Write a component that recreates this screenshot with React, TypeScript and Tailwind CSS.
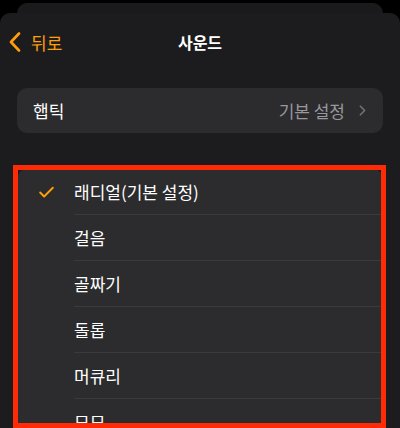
import { Check, ChevronRight } from "lucide-react";

const SOUNDS = ["래디얼(기본 설정)", "걸음", "골짜기", "돌롭", "머큐리", "모모"];

export default function App() {
  return (
    <div
      className="w-[400px] h-[428px] bg-black overflow-hidden flex flex-col"
      style={{ fontFamily: '"Noto Sans CJK KR", "Noto Sans", sans-serif' }}
    >
      {/* stacked sheet behind */}
      <div className="mx-[17px] mt-[3px] h-[10px] shrink-0 rounded-t-[10px] bg-[#1a1a1c]" />

      {/* main sheet */}
      <div className="flex-1 bg-[#1c1c1e] rounded-t-[10px] relative">
        {/* Nav */}
        <div className="h-[58px] relative flex items-center">
          <div className="flex items-center pl-[9px] text-[#ff9f0a]">
            <svg width="12" height="20" viewBox="0 0 12 20" fill="none" stroke="currentColor" strokeWidth="2.6" strokeLinecap="round" strokeLinejoin="round">
              <path d="M10 1.5 L2 10 L10 18.5" />
            </svg>
            <span className="text-[17px] leading-none ml-[10px]">뒤로</span>
          </div>
          <div className="absolute inset-x-0 text-center text-white text-[16px] font-bold leading-none pointer-events-none">
            사운드
          </div>
        </div>

        {/* Haptic */}
        <div className="mx-[17px] mt-[17px] h-[45px] rounded-[10px] bg-[#2c2c2e] flex items-center px-[16px]">
          <span className="text-white text-[17px] leading-none">햅틱</span>
          <span className="ml-auto text-[#98989e] text-[17px] leading-none">기본 설정</span>
          <ChevronRight className="w-[17px] h-[17px] text-[#707075] ml-[9px] -mr-[4px]" strokeWidth={2.4} />
        </div>

        {/* Sound list */}
        <div className="mx-[17px] mt-[36px] rounded-t-[10px] bg-[#2c2c2e]">
          {SOUNDS.map((s, i) => (
            <div key={s} className="h-[46px] flex items-center">
              <div className="w-[57px] flex justify-center pl-[2px] shrink-0">
                {i === 0 && <Check className="w-[19px] h-[19px] text-[#ff9f0a]" strokeWidth={2.4} />}
              </div>
              <div className="flex-1 h-full flex items-center border-b border-[#3a3a3c]">
                <span className="text-white text-[17px] leading-none">{s}</span>
              </div>
            </div>
          ))}
        </div>

        {/* highlight box */}
        <div className="absolute left-[13px] top-[152px] w-[373px] h-[263px] border-[5px] border-[#ff2b06] pointer-events-none" />
      </div>
    </div>
  );
}
